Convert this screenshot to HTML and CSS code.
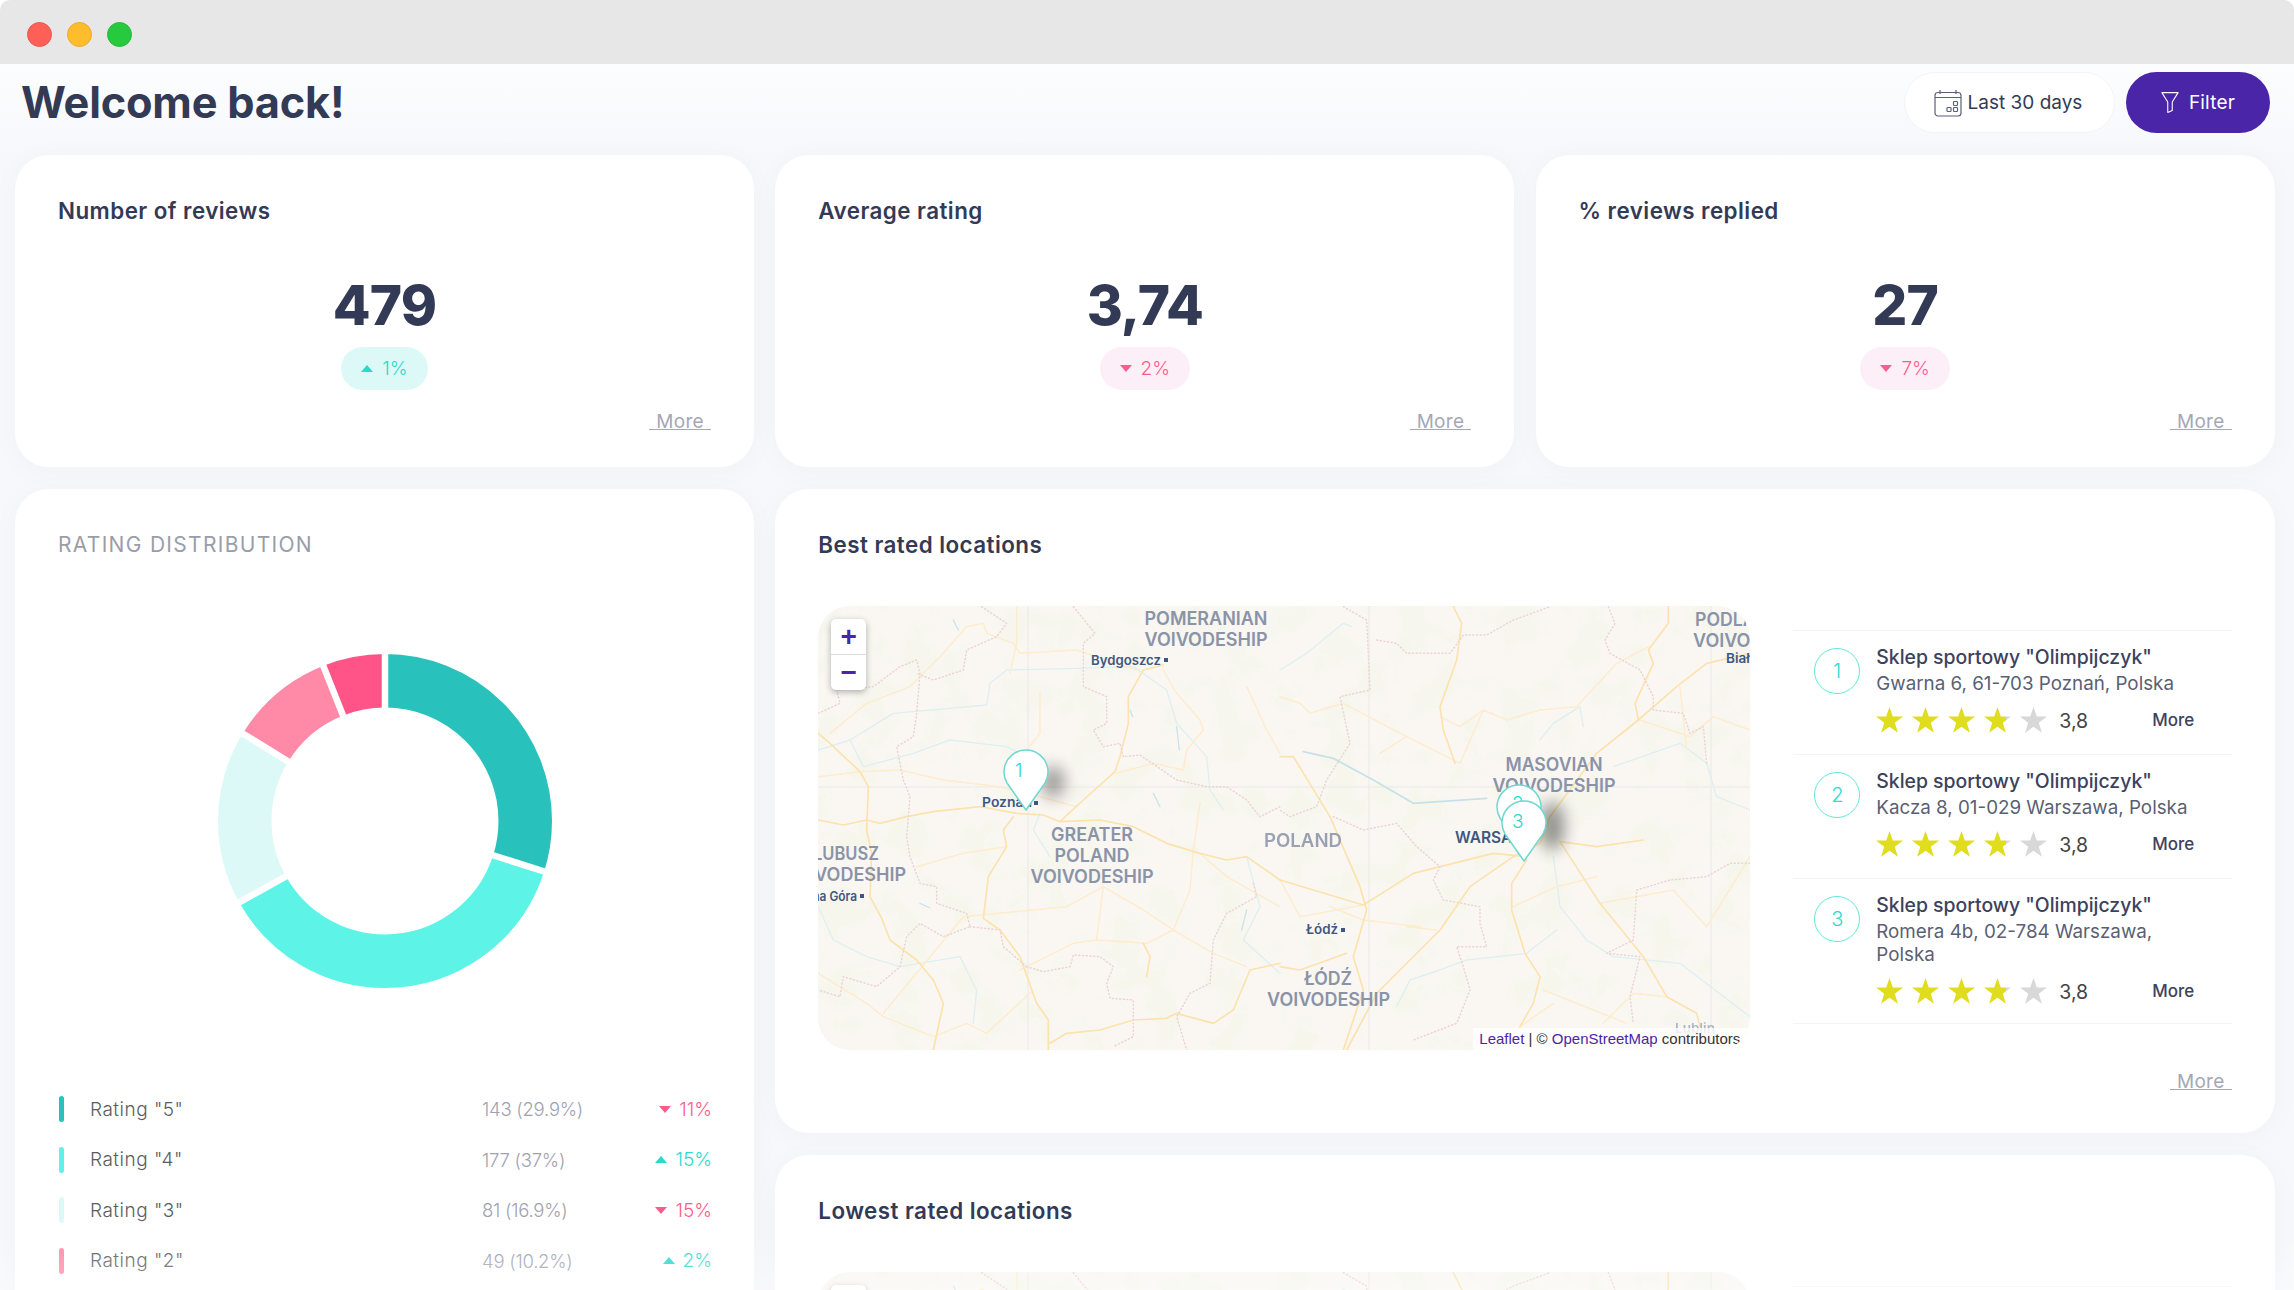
FILE: index.html
```html
<!DOCTYPE html>
<html lang="en">
<head>
<meta charset="utf-8">
<title>Dashboard</title>
<link rel="stylesheet" href="styles.css">
</head>
<body>
<svg class="defs" width="0" height="0">
  <defs>
    <linearGradient id="partial"><stop offset="80%" stop-color="#e0dc1e"/><stop offset="80%" stop-color="#d8d8d8"/></linearGradient>
    <symbol id="star" viewBox="0 0 27 26"><path d="M13.5 0l3.3 9.6H27l-8.2 6.1 3.1 10-8.4-6-8.4 6 3.1-10L0 9.6h10.200z"/></symbol>
    <filter id="mott" x="0" y="0" width="100%" height="100%">
      <feTurbulence type="fractalNoise" baseFrequency=".028" numOctaves="3" seed="7"/>
      <feColorMatrix values="0 0 0 0 .88  0 0 0 0 .92  0 0 0 0 .80  0 0 0 7 -3.5"/>
    </filter>
    <filter id="soft"><feGaussianBlur stdDeviation=".6"/></filter>
    <filter id="shade" x="-150%" y="-150%" width="400%" height="400%"><feGaussianBlur stdDeviation="8"/></filter>
    <g id="mapart">
      <rect x="818" y="606" width="932" height="444" fill="#faf7f3"/>
      <rect x="818" y="606" width="932" height="444" filter="url(#mott)" opacity=".42"/>
      <g filter="url(#soft)" fill="none" stroke-linejoin="round" stroke-linecap="round">
        <g stroke="#ebe9e5" stroke-width="1"><path d="M1028 606V1050M1369 606V1050M1711 606V1050M818 787H1750"/></g>
        <g transform="translate(800 590) scale(.33333)">
          <g stroke="#deeff1" stroke-width="4">
            <path d="M55 480L150 450 280 370 560 345 570 280 620 240 830 235 1000 230 1100 300 1130 400 1220 500 1230 600 1270 660"/>
            <path d="M150 450L190 530 340 490 450 450 620 470 680 500M720 670L700 720 750 800M1340 800L1380 950 1330 1050 1440 1150"/>
            <path d="M55 950L100 1050 200 1100 300 1130 480 1100 530 1200 520 1300"/>
            <path d="M460 90l15 30M990 360l8 20M1130 410l8 70M1340 960l-15 60M1060 610l20 40M360 940l30 14" stroke="#c9e4ea"/>
          </g>
          <g stroke="#fdeccd" stroke-width="4.500">
            <path d="M55 560L180 545 300 540 430 570 600 590 720 620 830 650M90 430L200 340 330 290 420 200 500 110 550 100 560 130 640 160 660 190 830 180 1010 240"/>
            <path d="M650 50V160L630 250M720 310V430L680 480M1090 240L1130 310 1200 390 1210 420 1160 480 1150 540 1060 520 950 550M1340 290L1400 420 1440 490M1200 640L1180 780 1170 900 1120 1020 1040 1060 890 1050 820 1060 660 1140"/>
            <path d="M55 1150L200 1240 250 1280 400 1340 500 1300 560 1330 700 1200M910 890L890 1050M250 1270L490 980 800 950 910 890 1030 960 1120 1020 1240 1090 1340 1130M350 830L490 790 620 770M1200 790L1280 860 1440 950"/>
          </g>
          <g stroke="#fde2ad" stroke-width="5">
            <path d="M55 430L90 460 180 545 205 590 200 720 215 790 210 920 245 985 270 1050 350 1110 400 1170 430 1240 400 1380"/>
            <path d="M55 690L130 705 200 690 240 700 320 680 400 665 540 650 650 670 730 675 780 695 900 690 1000 710 1100 760 1200 790 1280 810 1340 800 1440 870"/>
            <path d="M780 695L850 630 945 545 960 500 985 400 985 320 1030 240 1090 225M640 680L610 720 620 770 565 860 550 985 600 1020 660 1100 710 1240 745 1290 745 1380M750 1360L800 1330 900 1320 1000 1290 1100 1285 1130 1270 1240 1300 1300 1260 1350 1140 1440 1120"/>
            <path d="M1030 1060L1050 1100 1040 1160"/>
          </g>
          <g stroke="#ecd3d6" stroke-width="4.500" stroke-dasharray="3 8">
            <path d="M55 370L120 340 110 300 220 290 300 230 350 210 360 250 350 370 340 440 290 470 310 570 330 620 320 740 330 800 360 880 410 890 410 940 500 970 510 1010 430 1040 360 1000 320 1040 300 1130 230 1190 130 1160 120 1220 55 1200"/>
            <path d="M545 50L620 100 590 140 500 180 490 240 400 270 350 250M820 50L885 130 850 160 850 290 920 320 920 400 880 420 910 470 960 460 970 500 1020 495 1130 570 1220 590 1280 590 1340 630 1380 680 1440 650"/>
            <path d="M680 1130L730 1145 810 1130 820 1095 900 1100 940 1130 920 1180 930 1225 1000 1230 1000 1340 940 1370M1360 880L1370 920 1280 970 1240 1050 1230 1180 1170 1210 1130 1280 1160 1380M510 1010L600 1020 610 1070 680 1130"/>
          </g>
        </g>
        <g transform="translate(1280 590) scale(.33333)">
          <g stroke="#deeff1" stroke-width="4">
            <path d="M0 240L80 190 190 100 215 110"/>
            <path d="M70 485L160 505 280 570 400 640 620 625" stroke-width="5.500" stroke="#c6e2e8"/>
            <path d="M780 450L820 400 900 350 910 410M820 800L840 950 920 1050 1000 1100 1200 1120 1410 1280M350 1250L390 1170 480 1140 560 1110 740 1090 830 1020M1000 530L1200 460 1280 520 1310 620 1410 660"/>
          </g>
          <g stroke="#fdeccd" stroke-width="4.500">
            <path d="M0 320L60 340 90 370 190 340 380 440 540 520 610 360 680 390 780 360 890 350 1010 220 1105 170M300 490L380 440M0 870L60 980 250 945M420 1010L250 990 150 950M380 1010L470 1020M790 1200L1040 1300M820 1240L720 1310M700 950L830 890 950 860M960 940L1180 900 1280 1010 1410 800M1080 390L1230 440 1300 380 1410 420M1200 290L1220 480M1155 1220L1060 1210 970 1300M610 360L540 410 480 380"/>
          </g>
          <g stroke="#fde2ad" stroke-width="5">
            <path d="M520 50L545 100 530 210 480 350 490 420 525 520M1165 50V100L1105 180 1120 220 1065 340 1075 390 950 490 810 680 780 760 700 800 570 890 480 1020 360 1140 290 1210 200 1380"/>
            <path d="M740 800L640 790 400 850 250 945 100 900 0 870M1410 190L1280 220 1190 290 1075 390M840 755L960 940 1090 1100 1160 1220 1250 1270 1260 1310M740 810L695 880 695 960 735 1090 780 1160 760 1240 720 1310M840 755L950 770 1090 750M0 500H40L150 680 240 890 260 960 220 1100 250 1200 190 1380M0 1130L60 1140 200 1090"/>
          </g>
          <g stroke="#ecd3d6" stroke-width="4.500" stroke-dasharray="3 8">
            <path d="M190 50L260 90 270 300 180 320 210 460 140 570 110 650 30 680 0 660M160 680L250 720 350 700 410 770 480 830 460 870 490 930 600 950 600 1000 620 1070 530 1070 550 1130 570 1200 530 1300 400 1350"/>
            <path d="M290 150L350 160 380 190 510 190 550 135 620 135 700 90 810 50M985 50L1005 100 975 150 990 190 1080 240 1120 320 1120 360 1210 370 1230 430 1270 410 1280 520M1410 820L1350 820 1280 860 1170 870 1070 900 1060 1050 980 1090 1080 1100 1050 1220 1060 1300"/>
          </g>
        </g>
      </g>
    </g>
    <g id="maplabels">
      <g class="map-region">
        <text x="1206" y="625" text-anchor="middle" textLength="123" lengthAdjust="spacingAndGlyphs">POMERANIAN</text>
        <text x="1206" y="646" text-anchor="middle" textLength="123" lengthAdjust="spacingAndGlyphs">VOIVODESHIP</text>
        <text x="1092" y="841" text-anchor="middle" textLength="82" lengthAdjust="spacingAndGlyphs">GREATER</text>
        <text x="1092" y="862" text-anchor="middle" textLength="75" lengthAdjust="spacingAndGlyphs">POLAND</text>
        <text x="1092" y="883" text-anchor="middle" textLength="123" lengthAdjust="spacingAndGlyphs">VOIVODESHIP</text>
        <text x="813" y="860" textLength="66" lengthAdjust="spacingAndGlyphs">LUBUSZ</text>
        <text x="783" y="881" textLength="123" lengthAdjust="spacingAndGlyphs">VOIVODESHIP</text>
        <text x="1264" y="847" textLength="78" lengthAdjust="spacingAndGlyphs" opacity=".85">POLAND</text>
        <text x="1554" y="771" text-anchor="middle" textLength="97" lengthAdjust="spacingAndGlyphs">MASOVIAN</text>
        <text x="1554" y="792" text-anchor="middle" textLength="123" lengthAdjust="spacingAndGlyphs">VOIVODESHIP</text>
        <text x="1328" y="985" text-anchor="middle" textLength="48" lengthAdjust="spacingAndGlyphs">ŁÓDŹ</text>
        <text x="1267" y="1006" textLength="123" lengthAdjust="spacingAndGlyphs">VOIVODESHIP</text>
        <text x="1695" y="626" textLength="100" lengthAdjust="spacingAndGlyphs">PODLASKIE</text>
        <text x="1693" y="647" textLength="123" lengthAdjust="spacingAndGlyphs">VOIVODESHIP</text>
      </g>
      <g class="map-city">
        <text x="1091" y="665" textLength="70" lengthAdjust="spacingAndGlyphs">Bydgoszcz</text><rect x="1164" y="658" width="4" height="4"/>
        <text x="982" y="807" textLength="50" lengthAdjust="spacingAndGlyphs">Poznań</text><rect x="1034" y="801" width="4" height="4"/>
        <text x="784" y="901" textLength="73" lengthAdjust="spacingAndGlyphs">Zielona Góra</text><rect x="860" y="894" width="4" height="4"/>
        <text x="1306" y="934" textLength="32" lengthAdjust="spacingAndGlyphs">Łódź</text><rect x="1341" y="928" width="4" height="4"/>
        <text x="1726" y="663" textLength="60" lengthAdjust="spacingAndGlyphs">Białystok</text>
        <text class="map-capital" x="1455" y="843" textLength="72" lengthAdjust="spacingAndGlyphs">WARSAW</text>
        <text x="1675" y="1033" textLength="40" lengthAdjust="spacingAndGlyphs" opacity=".4">Lublin</text>
      </g>
    </g>
    <g id="pin">
      <path d="M0 38L-19 11A22 22 0 1 1 19 11Z" fill="#fff" stroke="#6ed8d0" stroke-width="1.500" stroke-linejoin="round"/>
    </g>
  </defs>
</svg>

<div class="window">
  <div class="titlebar">
    <span class="light light-red"></span>
    <span class="light light-yellow"></span>
    <span class="light light-green"></span>
  </div>
  <main class="page">
    <header class="head">
      <h1 class="welcome">Welcome back!</h1>
      <div class="head-actions">
        <button class="btn btn-range">
          <svg class="ico-cal" viewBox="0 0 28 28" fill="none" stroke="#5b6079" stroke-width="1.200"><rect x="1" y="3.500" width="26" height="23.500" rx="3"/><path d="M1 8.500H27M6 1V5M22 1V5"/><rect x="13" y="18.500" width="4" height="4" rx=".8"/><rect x="19.500" y="18.500" width="4" height="4" rx=".8"/><rect x="19.500" y="12.500" width="4" height="4" rx=".8"/></svg>
          Last 30 days
        </button>
        <button class="btn btn-filter">
          <svg class="ico-filter" viewBox="0 0 20 24" fill="none" stroke="#fff" stroke-width="1.200" stroke-linejoin="round"><path d="M1 1H19L12.500 11.500V21L7.500 23V11.500Z"/></svg>
          Filter
        </button>
      </div>
    </header>

    <section class="grid">
      <article class="card kpi">
        <h2 class="card-title">Number of reviews</h2>
        <div class="kpi-num">479</div>
        <div class="badge badge-up"><i class="tri tri-up"></i>1%</div>
        <a class="more">More</a>
      </article>
      <article class="card kpi">
        <h2 class="card-title">Average rating</h2>
        <div class="kpi-num">3,74</div>
        <div class="badge badge-down"><i class="tri tri-down"></i>2%</div>
        <a class="more">More</a>
      </article>
      <article class="card kpi">
        <h2 class="card-title">% reviews replied</h2>
        <div class="kpi-num">27</div>
        <div class="badge badge-down"><i class="tri tri-down"></i>7%</div>
        <a class="more">More</a>
      </article>

      <article class="card dist">
        <h2 class="card-title card-title-muted">RATING DISTRIBUTION</h2>
        <svg class="donut" width="340" height="340" viewBox="0 0 340 340" fill="none" stroke-width="53.500">
          <g transform="rotate(-90 170 170)">
            <circle cx="170" cy="170" r="140.250" pathLength="100" stroke="#29c1bc" stroke-dasharray="29.900 70.100"/>
            <circle cx="170" cy="170" r="140.250" pathLength="100" stroke="#5df3e6" stroke-dasharray="37 63" stroke-dashoffset="-29.900"/>
            <circle cx="170" cy="170" r="140.250" pathLength="100" stroke="#ddf9f7" stroke-dasharray="16.900 83.100" stroke-dashoffset="-66.900"/>
            <circle cx="170" cy="170" r="140.250" pathLength="100" stroke="#ff8aa8" stroke-dasharray="10.200 89.800" stroke-dashoffset="-83.800"/>
            <circle cx="170" cy="170" r="140.250" pathLength="100" stroke="#ff5488" stroke-dasharray="6 94" stroke-dashoffset="-94"/>
          </g>
          <g stroke="#fff" stroke-width="6.500">
            <path d="M170 170V0"/>
            <path d="M170 170V0" transform="rotate(107.600 170 170)"/>
            <path d="M170 170V0" transform="rotate(240.800 170 170)"/>
            <path d="M170 170V0" transform="rotate(301.600 170 170)"/>
            <path d="M170 170V0" transform="rotate(338.300 170 170)"/>
          </g>
        </svg>
        <ul class="legend">
          <li class="legend-row"><i class="bar bar-5"></i><span class="legend-name">Rating "5"</span><span class="legend-val">143 (29.9%)</span><span class="delta delta-down"><i class="tri tri-down"></i>11%</span></li>
          <li class="legend-row"><i class="bar bar-4"></i><span class="legend-name">Rating "4"</span><span class="legend-val">177 (37%)</span><span class="delta delta-up"><i class="tri tri-up"></i>15%</span></li>
          <li class="legend-row"><i class="bar bar-3"></i><span class="legend-name">Rating "3"</span><span class="legend-val">81 (16.9%)</span><span class="delta delta-down"><i class="tri tri-down"></i>15%</span></li>
          <li class="legend-row"><i class="bar bar-2"></i><span class="legend-name">Rating "2"</span><span class="legend-val">49 (10.2%)</span><span class="delta delta-up"><i class="tri tri-up"></i>2%</span></li>
        </ul>
      </article>

      <article class="card locs">
        <h2 class="card-title">Best rated locations</h2>
        <div class="locs-body">
          <div class="map">
            <svg class="map-svg" viewBox="818 606 932 444">
              <use href="#mapart"/>
              <use href="#maplabels"/>
              <ellipse cx="1053" cy="782" rx="12" ry="16" fill="#000" opacity=".36" filter="url(#shade)"/>
              <ellipse cx="1552" cy="826" rx="13" ry="24" fill="#000" opacity=".4" filter="url(#shade)"/>
              <g class="pin-num">
                <use href="#pin" x="1026" y="772"/><text x="1015" y="777">1</text>
                <use href="#pin" x="1519" y="807"/><text x="1512" y="810">2</text>
                <use href="#pin" x="1524" y="823"/><text x="1512" y="828">3</text>
              </g>
            </svg>
            <div class="zoomctl"><span class="zoomctl-btn">+</span><span class="zoomctl-btn">−</span></div>
            <div class="attrib"><a>Leaflet</a> | © <a>OpenStreetMap</a> contributors</div>
          </div>
          <div class="side">
            <ul class="rank">
              <li class="rank-item">
                <span class="rank-no">1</span>
                <div class="rank-main">
                  <div class="rank-name">Sklep sportowy "Olimpijczyk"</div>
                  <div class="rank-addr">Gwarna 6, 61-703 Poznań, Polska</div>
                  <div class="rank-foot">
                    <svg class="st st-on"><use href="#star"/></svg><svg class="st st-on"><use href="#star"/></svg><svg class="st st-on"><use href="#star"/></svg><svg class="st st-part"><use href="#star"/></svg><svg class="st st-off"><use href="#star"/></svg>
                    <span class="rank-score">3,8</span><a class="rank-more">More</a>
                  </div>
                </div>
              </li>
              <li class="rank-item">
                <span class="rank-no">2</span>
                <div class="rank-main">
                  <div class="rank-name">Sklep sportowy "Olimpijczyk"</div>
                  <div class="rank-addr">Kacza 8, 01-029 Warszawa, Polska</div>
                  <div class="rank-foot">
                    <svg class="st st-on"><use href="#star"/></svg><svg class="st st-on"><use href="#star"/></svg><svg class="st st-on"><use href="#star"/></svg><svg class="st st-part"><use href="#star"/></svg><svg class="st st-off"><use href="#star"/></svg>
                    <span class="rank-score">3,8</span><a class="rank-more">More</a>
                  </div>
                </div>
              </li>
              <li class="rank-item">
                <span class="rank-no">3</span>
                <div class="rank-main">
                  <div class="rank-name">Sklep sportowy "Olimpijczyk"</div>
                  <div class="rank-addr">Romera 4b, 02-784 Warszawa, Polska</div>
                  <div class="rank-foot">
                    <svg class="st st-on"><use href="#star"/></svg><svg class="st st-on"><use href="#star"/></svg><svg class="st st-on"><use href="#star"/></svg><svg class="st st-part"><use href="#star"/></svg><svg class="st st-off"><use href="#star"/></svg>
                    <span class="rank-score">3,8</span><a class="rank-more">More</a>
                  </div>
                </div>
              </li>
            </ul>
            <a class="more more-side">More</a>
          </div>
        </div>
      </article>

      <article class="card locs locs-low">
        <h2 class="card-title">Lowest rated locations</h2>
        <div class="locs-body">
          <div class="map">
            <svg class="map-svg" viewBox="818 606 932 444"><use href="#mapart"/></svg>
            <div class="zoomctl"></div>
          </div>
          <div class="side"><ul class="rank rank-low"><li class="rank-item"></li></ul></div>
        </div>
      </article>
    </section>
  </main>
  <div class="fade"></div>
</div>
</body>
</html>
```

FILE: styles.css
```css
* { box-sizing: border-box; }
html, body { margin: 0; padding: 0; background: #fff; }
body { width: 2294px; height: 1290px; overflow: hidden; font-family: Inter, "Noto Sans", sans-serif; color: #333a56; }
.defs { position: absolute; }
ul { list-style: none; margin: 0; padding: 0; }
h1, h2 { margin: 0; }
i { display: inline-block; font-style: normal; }

.window { position: relative; height: 1290px; overflow: hidden; background: linear-gradient(#fcfdff 64px, #f7f8fb 155px); border-radius: 10px 10px 0 0; }
.titlebar { height: 64px; background: #e7e7e7; display: flex; align-items: center; gap: 15px; padding: 4px 0 0 27px; }
.light { width: 25px; height: 25px; border-radius: 50%; }
.light-red { background: #fe5f57; border: 1px solid #e9584f; }
.light-yellow { background: #ffbd2e; border: 1px solid #eda92c; }
.light-green { background: #27c93f; border: 1px solid #25b83a; }

.page { height: 1226px; overflow: hidden; padding: 0 19px 0 15px; }
.head { height: 91px; display: flex; justify-content: space-between; padding: 8px 5px 0 6px; }
.welcome { font-size: 43.300px; font-weight: 700; line-height: 61px; letter-spacing: -.2px; }
.head-actions { display: flex; gap: 11px; height: 61px; }
.btn { height: 61px; border-radius: 31px; font: 400 19px/1 Inter, sans-serif; display: flex; align-items: center; justify-content: center; }
.btn-range { width: 211px; background: #fff; border: 1px solid #f3f4f7; color: #333a56; gap: 6px; padding-right: 9px; }
.btn-filter { width: 144px; background: #4b25a8; border: 0; color: #fff; gap: 10px; letter-spacing: .2px; }
.ico-cal { width: 28px; height: 28px; }
.ico-filter { width: 18px; height: 23px; }

.grid { display: grid; grid-template-columns: repeat(3, 739px); grid-template-rows: 312px 644px 500px; gap: 22px 21.300px; }
.card { background: #fff; border-radius: 34px; box-shadow: 0 4px 30px rgba(60, 70, 120, .03); padding: 44px 43px; }
.card-title { font-size: 22.400px; font-weight: 600; line-height: 24px; letter-spacing: .45px; color: #333a56; }
.card-title-muted { font-weight: 400; color: #9a9da9; font-size: 21px; letter-spacing: 1.300px; }

.kpi { display: flex; flex-direction: column; align-items: center; padding-bottom: 0; }
.kpi .card-title { align-self: stretch; }
.kpi-num { flex: none; font-size: 55px; font-weight: 800; line-height: 60px; margin-top: 52px; letter-spacing: -.9px; }
.badge { flex: none; height: 43px; min-width: 87px; padding: 0 20px; margin-top: 12px; border-radius: 22px; display: flex; align-items: center; justify-content: center; gap: 9px; font-size: 19px; font-weight: 300; }
.badge-up { background: #dcf9f7; color: #2dd9cc; }
.badge-down { background: #fdeff7; color: #ff5c8a; }
.tri { width: 0; height: 0; border-left: 6px solid transparent; border-right: 6px solid transparent; }
.tri-up { border-bottom: 7px solid #2bd8cb; }
.tri-down { border-top: 7px solid #ff5c8a; }
.more { display: block; flex: none; align-self: flex-end; margin-top: 20px; height: 20px; padding: 0 7px; border-bottom: 1.500px solid #a5a7b5; color: #a5a7b5; font-size: 19px; font-weight: 400; line-height: 24px; letter-spacing: .3px; }

.dist { grid-column: 1; grid-row: 2 / span 2; padding-bottom: 0; }
.donut { display: block; margin: 94px auto 0; }
.legend { margin-top: 93px; }
.legend-row { height: 50.500px; display: flex; align-items: center; font-size: 19px; font-weight: 300; }
.bar { width: 5px; height: 26px; border-radius: 3px; margin: 0 1px 0 1px; }
.bar-5 { background: #29c1bc; }
.bar-4 { background: #5df3e6; }
.bar-3 { background: #ddf9f7; }
.bar-2 { background: #ff8aa8; }
.legend-name { width: 392px; margin-left: 25px; color: #5c5c60; letter-spacing: .5px; }
.legend-val { flex: 1; color: #a0a2b0; font-size: 18.500px; letter-spacing: -.25px; }
.delta { display: flex; align-items: center; gap: 8px; position: relative; left: 1px; }
.delta-up { color: #2dd9cc; }
.delta-down { color: #ff5c8a; }

.locs { grid-column: 2 / span 2; }
.locs-body { display: flex; gap: 43px; margin-top: 49px; }
.map { position: relative; flex: 0 0 932px; height: 444px; border-radius: 32px; overflow: hidden; }
.map-svg { display: block; width: 932px; height: 444px; }
.map-region text { font: 600 18.500px Inter, sans-serif; fill: #8a93a8; }
.map-city text { font: 600 13px Inter, sans-serif; fill: #3f5680; }
.map-city .map-capital { font-size: 16px; }
.map-city rect { fill: #3f5680; }
.pin-num text { font: 300 19px Inter, sans-serif; fill: #2dd9cc; }
.zoomctl { position: absolute; left: 13px; top: 13px; width: 35px; height: 71px; background: #fff; border-radius: 5px; box-shadow: 0 2px 6px rgba(0, 0, 0, .3); display: flex; flex-direction: column; }
.zoomctl-btn { flex: 1; display: flex; align-items: center; justify-content: center; color: #4b25a8; font: 700 28px/1 "Liberation Sans", sans-serif; }
.zoomctl-btn + .zoomctl-btn { border-top: 1px solid #ddd; }
.attrib { position: absolute; right: 0; bottom: 0; width: 277px; height: 22px; padding: 0 0 0 6px; background: rgba(255, 255, 255, .75); font: 400 15px/22px "Liberation Sans", sans-serif; color: #333; white-space: nowrap; overflow: hidden; }
.attrib a { color: #4b25a8; }

.side { flex: 1; display: flex; flex-direction: column; }
.rank { margin-top: 24px; border-top: 1.500px solid #f4f4f6; }
.rank-item { display: flex; gap: 16px; padding: 14px 0 18px 21px; min-height: 124px; border-bottom: 1.500px solid #f4f4f6; }
.rank-no { flex: 0 0 46px; width: 46px; height: 46px; margin-top: 3px; border-radius: 50%; border: 1.500px solid #5fe8dd; color: #2dd9cc; font-size: 20px; font-weight: 300; display: flex; align-items: center; justify-content: center; }
.rank-main { flex: 1; }
.rank-name { font-size: 19.400px; font-weight: 500; line-height: 24px; color: #3c425c; }
.rank-addr { font-size: 18.800px; font-weight: 400; line-height: 23px; color: #5a5f73; padding-right: 30px; margin-top: 3px; }
.rank-foot { display: flex; align-items: center; margin-top: 11px; height: 28px; width: 318px; }
.st { width: 27px; height: 26px; margin-right: 9px; }
.st-on { fill: #e0dc1e; }
.st-part { fill: url(#partial); }
.st-off { fill: #d8d8d8; }
.rank-score { font-size: 19.500px; font-weight: 400; color: #444; margin-left: 3px; position: relative; top: 1px; }
.rank-more { margin-left: auto; font-size: 17px; font-weight: 500; color: #3c425c; position: relative; }
.more-side { margin-top: 46px; }

.rank-low { margin-top: 14px; }

.fade { position: absolute; left: 0; right: 0; bottom: 0; height: 60px; background: linear-gradient(rgba(255, 255, 255, 0), rgba(255, 255, 255, .35)); pointer-events: none; }
```
